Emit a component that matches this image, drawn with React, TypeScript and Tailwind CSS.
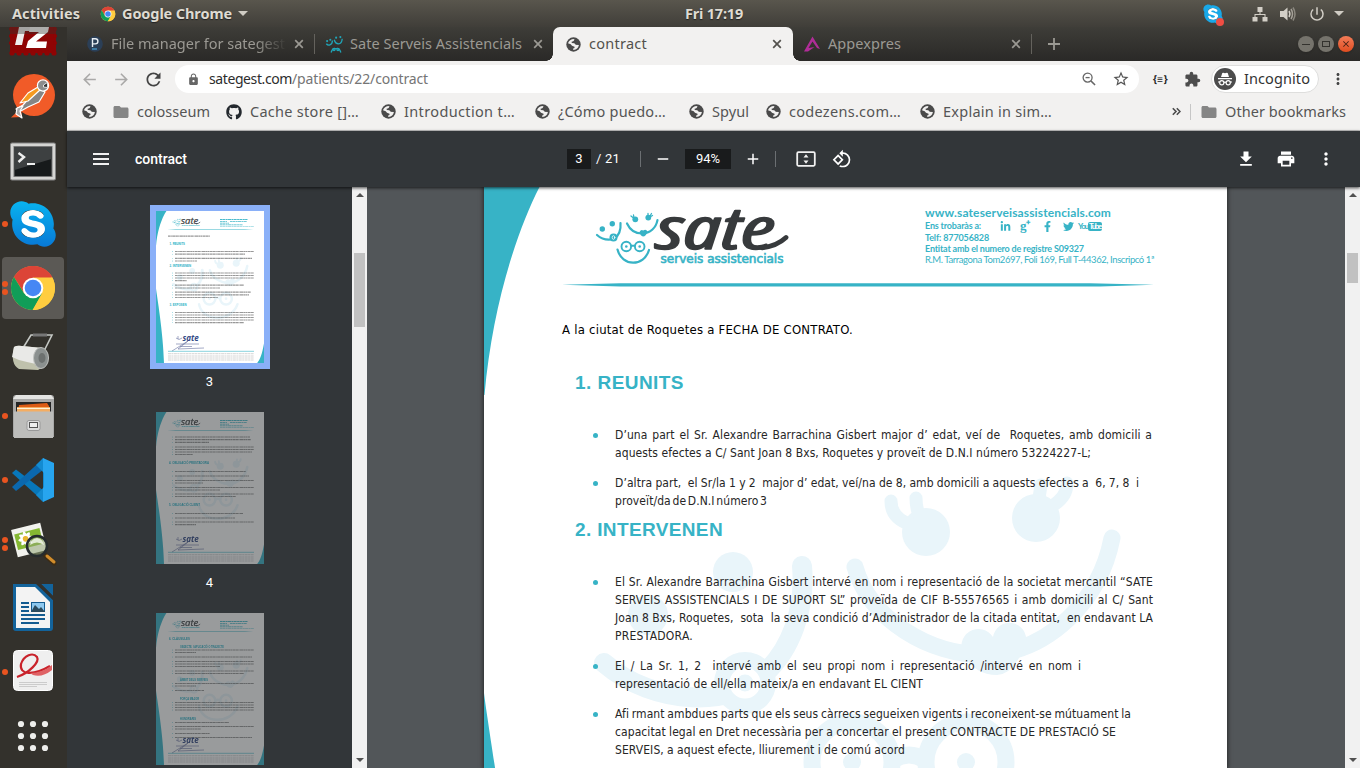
import React, { useLayoutEffect, useRef, useState } from 'react';
import {
  MdArrowBack, MdArrowForward, MdRefresh, MdLock, MdStarBorder, MdExtension, MdMoreVert,
  MdFolder, MdFileDownload, MdPrint, MdRotate90DegreesCcw, MdPowerSettingsNew,
  MdClose, MdAdd, MdRemove,
} from 'react-icons/md';
import { FaGithub, FaSkype, FaLinkedinIn, FaFacebookF, FaTwitter } from 'react-icons/fa';

const TEAL = '#37b3c6';

/* Text run stretched to a fixed width through letter or word spacing. */
function Fit({ w, text, words = false, className = '' }: { w: number; text: string; words?: boolean; className?: string }) {
  const ref = useRef<HTMLSpanElement>(null);
  const [gap, setGap] = useState(0);
  useLayoutEffect(() => {
    const el = ref.current;
    if (!el) return;
    const natural = el.getBoundingClientRect().width;
    const slots = words ? text.split('').filter((c) => c === ' ' || c === '\u00a0').length : text.length;
    setGap((w - natural) / Math.max(1, slots));
  }, []);
  return (
    <span className={`block shrink-0 whitespace-pre ${className}`} style={{ width: w }}>
      <span ref={ref} className="inline-block whitespace-pre" style={words ? { wordSpacing: gap } : { letterSpacing: gap }}>
        {text}
      </span>
    </span>
  );
}

function Globe() {
  return (
    <svg className="size-[15px] shrink-0" viewBox="0 0 15 15">
      <circle cx="7.5" cy="7.5" r="7.2" fill="#4a4a4a" />
      <path d="M2 6.2C2.6 4 4.6 2.1 7.2 1.9L8.6 2.6 7.4 4.2 5.6 4.8 5.8 6.1 8.4 6.3 9.8 7.8 12.9 8.1C12.5 10.800 10.400 12.900 7.500 13L6.900 11.700 8.500 11 8.500 9.700 6 8.800 4.700 7.200Z" fill="#f2f1f0" />
      <path d="M7.4 4.300L9.700 3.200 9.600 5.200 11.500 5.400 11.800 7.400 9.800 7.300 8.500 5.900Z" fill="#4a4a4a" />
    </svg>
  );
}

function TabClose({ className }: { className: string }) {
  return (
    <svg className={`size-[14px] shrink-0 ${className}`} viewBox="0 0 14 14">
      <path d="M3.200 3.200L10.800 10.800M10.800 3.200L3.200 10.800" stroke="currentColor" strokeWidth="1.700" />
    </svg>
  );
}

function ChromeLogo({ className }: { className: string }) {
  return (
    <svg className={className} viewBox="0 0 48 48">
      <circle cx="24" cy="24" r="22" fill="#fbc937" />
      <path d="M24 24L4.950 13A22 22 0 0 1 43.050 13Z" fill="#dc4437" />
      <path d="M24 13.500H43.400A22 22 0 0 0 4.950 13L15 29Z" fill="#dc4437" />
      <path d="M4.950 13A22 22 0 0 0 24 46L33.100 29.200 24 34 15 29.200Z" fill="#119d58" />
      <path d="M33.200 29.200L23.500 46A22 22 0 0 0 43.300 13.500H24Z" fill="#ffcd40" />
      <circle cx="24" cy="24" r="10.300" fill="#fff" />
      <circle cx="24" cy="24" r="8.300" fill="#4687f4" />
    </svg>
  );
}

function Faces({ color, eyes }: { color: string; eyes: string }) {
  return (
    <g fill="none" stroke={color} strokeWidth="17" strokeLinecap="round">
      <circle cx="733" cy="572" r="20" fill={color} stroke="none" />
      <circle cx="648" cy="615" r="20" fill={color} stroke="none" />
      <path d="M802 566C806 610 790 650 765 673C735 707 655 707 604 663" strokeWidth="20" />
      <circle cx="745" cy="683" r="31" fill={color} stroke="none" />
      <circle cx="745" cy="683" r="12" stroke={eyes} strokeWidth="7" />
      <path d="M855 567C870 620 930 655 985 655C1050 652 1100 600 1112 538" />
      <path d="M964 655A15 15 0 0 1 993 637A16 16 0 0 1 1026 642Q1015 674 997 675Q975 675 964 655Z" fill={color} stroke="none" />
      <circle cx="926" cy="532" r="24" fill={color} stroke="none" />
      <path d="M891 501C891 513 898 521 912 525M916 498C916 508 918 514 924 524" strokeWidth="13" />
      <circle cx="1036" cy="518" r="24" fill={color} stroke="none" />
      <path d="M1041 485L1038 505M1067 483C1067 493 1062 502 1046 509" strokeWidth="13" />
      <circle cx="852" cy="762" r="40" />
      <circle cx="966" cy="762" r="40" />
      <circle cx="852" cy="762" r="9" fill={color} stroke="none" />
      <circle cx="966" cy="762" r="9" fill={color} stroke="none" />
      <path d="M893 760Q909 750 925 760M780 800C800 920 1000 930 1045 800" />
    </g>
  );
}

/* Letterhead: side waves, watermark, logo and the ruled line. */
function Letterhead() {
  return (
    <g>
      <path d="M484 159H556C548 172 543 180 539.500 187C515 235 492 310 484.500 395H484Z" fill={TEAL} />
      <path d="M484 693C489 735 535 1000 539 1205H484Z" fill={TEAL} />
      <path d="M1227 1070C1215 1140 1200 1180 1180 1205H1227Z" fill={TEAL} />
      <Faces color="#e9f5fa" eyes="#fff" />
      <g fill="none" stroke={TEAL} strokeWidth="2.200" strokeLinecap="round">
        <path d="M597 235C602 239.500 608 240.500 614 239C619 235.500 621 229 620.500 223" />
        <path d="M627 223.500C630 230 636 233.500 642 233.500C650 233 656 228 657.500 220" />
        <path d="M617.500 249.500C622 267 644 267 649 250" />
        <circle cx="626.300" cy="246.500" r="4.800" strokeWidth="1.900" />
        <circle cx="639.700" cy="246.500" r="4.800" strokeWidth="1.900" />
        <path d="M631.500 245.800H634.500" strokeWidth="1.900" />
        <path d="M631 216L633.500 218M633.500 215L634 218M651.500 213.500L650 216M648 213.500V216M652.500 215.500L650 217" strokeWidth="1.300" />
        <g fill={TEAL} stroke="none">
          <circle cx="602.300" cy="229" r="2.700" />
          <circle cx="612.300" cy="223.800" r="2.700" />
          <circle cx="613.500" cy="237.500" r="4" />
          <circle cx="626.300" cy="246.500" r="1.300" />
          <circle cx="639.700" cy="246.500" r="1.300" />
          <circle cx="635.300" cy="219.300" r="2.900" />
          <circle cx="648.300" cy="217.600" r="2.900" />
          <path d="M639.500 232Q641 229 643.200 230.500Q646 228.500 647.500 231.500Q646 236.500 643 236.500Q640.500 236 639.500 232Z" />
        </g>
        <ellipse cx="613.500" cy="237.500" rx="1.300" ry="1.800" stroke="#fff" strokeWidth=".8" />
      </g>
      <text x="656" y="249" fontFamily="'Open Sans','Noto Sans',sans-serif" fontStyle="italic" fontWeight="400" fontSize="59" textLength="119" lengthAdjust="spacingAndGlyphs" fill="#373a3c" stroke="#373a3c" strokeWidth="1.500" strokeLinejoin="round">sate</text>
      <path d="M762 247.800Q777 246 786 237.500" fill="none" stroke="#373a3c" strokeWidth="4.800" strokeLinecap="round" />
      <text x="660.500" y="262.500" fontFamily="'DejaVu Sans',sans-serif" fontSize="11.500" textLength="123" lengthAdjust="spacingAndGlyphs" fill={TEAL} stroke={TEAL} strokeWidth=".55">serveis assistencials</text>
      <path d="M562 284.700L620 283.200H1090L1154 284.700L1100 286.400H620Z" fill={TEAL} />
    </g>
  );
}

type Row = [number, number, number];
function Thumb({ heads, rows }: { heads: [string, number, number, number][]; rows: Row[] }) {
  return (
    <svg className="block h-[152px] w-[108px] bg-white" viewBox="0 0 108 152">
      <g transform="scale(0.14535) translate(-484 -159)"><Letterhead /></g>
      <g stroke={TEAL} strokeWidth=".9" strokeDasharray="2 .3 3 .4">
        <path d="M64 8.500H91.500" /><path d="M64 10.500H71M74 10.500H91M64 12.200H73M64 13.800H87" strokeWidth=".7" />
        <path d="M64 15.500H98" strokeWidth=".4" />
      </g>
      {heads.map(([t, x, y, w]) => (
        <text key={t} x={x} y={y} fontSize="3.300" fontWeight="700" fontFamily="'Liberation Sans',sans-serif" textLength={w} lengthAdjust="spacingAndGlyphs" fill="#27afc5">{t}</text>
      ))}
      {rows.map(([x, x2, y]) => (
        <React.Fragment key={y}>
          <path d={`M${x} ${y}H${x2}`} stroke="#444" strokeOpacity=".55" strokeWidth="1.200" strokeDasharray="2.300 .3 1.200 .4 3.100 .3" />
          {x > 12 && <circle cx="16.500" cy={y} r=".4" fill={TEAL} />}
        </React.Fragment>
      ))}
      <text x="26.500" y="129.500" fontFamily="'Open Sans',sans-serif" fontStyle="italic" fontWeight="700" fontSize="8" fill="#344a86">sate</text>
      <path d="M20 127q3 3 6 0M22 125v3M20 133H43M24 135.500H36M16 140L32 130L22 138L48 137" stroke="#66709f" strokeWidth=".6" fill="none" />
      <path d="M12 140.300H98" stroke={TEAL} strokeWidth=".6" />
      <path d="M12 142.700H98M12 145H98M12 147H98M12 149H98" stroke="#888" strokeOpacity=".5" strokeWidth=".7" strokeDasharray="3 .4 2 .5" />
    </svg>
  );
}

const dot = 'absolute left-[2px] size-[6px] rounded-full bg-[#e95420]';
function Slot({ children, dots = 0, active = false }: { children: React.ReactNode; dots?: number; active?: boolean }) {
  return (
    <div className="relative flex h-16 w-[66px] shrink-0 items-center justify-center">
      {active && <div className="absolute inset-y-[1px] left-[2px] w-[62px] rounded-[4px] bg-[#5b5955]" />}
      <div className="relative size-12">{children}</div>
      {dots === 1 && <span className={`${dot} top-[29px]`} />}
      {dots === 2 && <><span className={`${dot} top-[25px]`} /><span className={`${dot} top-[33px]`} /></>}
    </div>
  );
}

function Dock() {
  return (
    <aside className="flex w-[67px] shrink-0 flex-col overflow-hidden bg-[#33312c]">
      <div className="flex h-[37px] w-[66px] shrink-0 justify-center overflow-hidden">
        <svg className="h-[37px] w-12" viewBox="0 0 48 37">
          <path d="M1 0H47V26H1Z" fill="#8f0404" />
          <g fill="#8f0404">{[3, 10, 17, 24, 31, 38, 45].map((x) => <circle key={x} cx={x} cy="26" r="2.600" />)}{[2, 9, 16].map((y) => <React.Fragment key={y}><circle cx="2" cy={y} r="2" /><circle cx="46" cy={y} r="2" /></React.Fragment>)}</g>
          <path d="M10 0H24L23 4H16L13 18H6L9 5Z" fill="#eee" />
          <path d="M21 0H40L39 5L27 14.500H38L37 21H17L19 14L30 5H20Z" fill="#fff" />
          <path d="M0 0H48V7H0Z" fill="#33312c" opacity=".4" />
        </svg>
      </div>
      <Slot>
        <svg viewBox="0 0 48 48">
          <circle cx="25" cy="23" r="21" fill="#f15b28" />
          <path d="M2 45.500L12 36L13 45Z" fill="#f15b28" />
          <g stroke="#fff" strokeWidth="1.200" strokeLinejoin="round">
            <path d="M29 16L36 20L30 30L19 35L10 40L7 37L14 33L21 25Z" fill="#858585" />
            <path d="M29 15L19 21L11 31L19 29L31 18Z" fill="#f59a20" />
            <path d="M8 36L14 34L11 39L13 46L7 42Z" fill="#aaa" />
            <circle cx="34" cy="13.500" r="5.600" fill="#8c8c8c" />
            <path d="M34.500 13L38.500 10.500V15.500L34.500 15Z" fill="#333" strokeWidth=".8" />
          </g>
        </svg>
      </Slot>
      <Slot>
        <svg viewBox="0 0 48 48">
          <rect x="1.500" y="7" width="45" height="37" rx="1.500" fill="#d5d5d3" stroke="#858585" />
          <rect x="5" y="10.500" width="38" height="30" fill="#171a1b" stroke="#777" />
          <path d="M5.500 11H42.500V23L5.500 34Z" fill="#3d4041" />
          <path d="M9.500 17L15 21L9.500 26" fill="none" stroke="#eee" strokeWidth="2.400" /><path d="M18 28H26" stroke="#eee" strokeWidth="2" />
        </svg>
      </Slot>
      <Slot dots={1}>
        <div className="absolute left-[10px] top-[10px] size-[28px] rounded-full bg-white" />
        <svg className="absolute size-0"><defs><linearGradient id="sky" x1="0" y1="0" x2="0" y2="1"><stop stopColor="#08b3f0" /><stop offset="1" stopColor="#0879d6" /></linearGradient></defs></svg>
        <FaSkype className="absolute -left-[2px] -top-[2px] size-[52px]" style={{ fill: 'url(#sky)' }} />
      </Slot>
      <Slot dots={2} active><ChromeLogo className="size-12" /></Slot>
      <Slot>
        <svg viewBox="0 0 48 48">
          <path d="M14 20L22 7H43L34 25" fill="none" stroke="#c5c8c4" strokeWidth="1.600" />
          <path d="M24 7H38" stroke="#777" strokeWidth="3" />
          <path d="M5 19Q8 17 13 18L33 20Q40 26 34 39L29 42L10 41Q1 36 5 19Z" fill="#bfc1ac" />
          <path d="M5 19Q8 17 13 18L33 20L27 36L18 34L10 32L3 29Z" fill="#e9e9e7" />
          <ellipse cx="32" cy="30" rx="7.500" ry="10.500" fill="#8b908f" stroke="#c0c2c0" />
          <ellipse cx="33" cy="30" rx="3.500" ry="5" fill="#6c706f" />
        </svg>
      </Slot>
      <Slot dots={1}>
        <svg viewBox="0 0 48 48">
          <path d="M4 6Q4 3 7 3H42Q45 3 45 6V45H4Z" fill="#a9a9a8" />
          <path d="M4 7L7 3H42L45 7Z" fill="#e4e4e2" />
          <rect x="7" y="10" width="35" height="12" fill="#252525" />
          <path d="M10 13L38 11L40 14V20H9Z" fill="#dc5b15" /><path d="M8 15H41V20H8Z" fill="#f4ad62" /><path d="M8 16.500H41" stroke="#fff1d8" />
          <path d="M5 19.500H44V46H5Z" fill="#bdbdbb" />
          <rect x="18" y="28.500" width="13" height="10" rx="2" fill="#ddd" stroke="#999" /><rect x="20.500" y="30.500" width="8" height="5" fill="#eee" stroke="#555" />
        </svg>
      </Slot>
      <Slot dots={1}>
        <svg viewBox="0 0 48 48">
          <path d="M3 17L7 13.500L35 35L35 46Z" fill="#0877ba" />
          <path d="M3 31L7 35L35 13L35 2Z" fill="#0b68ae" />
          <path d="M34 2L45 7V41L34 46Z" fill="#27a5ef" />
          <path d="M34 2L27 9L35 17V31L27 39L34 46Z" fill="#138bd1" />
        </svg>
      </Slot>
      <Slot dots={2}>
        <svg viewBox="0 0 48 48">
          <g transform="rotate(-14 20 20)"><rect x="5" y="6" width="30" height="28" fill="#f2f2ee" /><rect x="7" y="11" width="26" height="16" fill="#85b832" />
            <g fill="#fff">{[0, 45, 90, 135].map((r) => <ellipse key={r} cx="17" cy="18" rx="7.500" ry="2.400" transform={`rotate(${r} 17 18)`} />)}</g><circle cx="17" cy="18" r="2.800" fill="#e8b52f" /></g>
          <path d="M36 35L45 43" stroke="#3d2c14" strokeWidth="5" strokeLinecap="round" /><path d="M38 36L45 42" stroke="#d18d2c" strokeWidth="3" strokeLinecap="round" />
          <circle cx="28" cy="26" r="10" fill="#91a477" fillOpacity=".55" stroke="#252b2d" strokeWidth="2.600" />
          <path d="M21 25Q28 20 35 25Q34 19 28 18Q22 19 21 25Z" fill="#fff" opacity=".75" />
        </svg>
      </Slot>
      <Slot>
        <svg viewBox="0 0 48 48">
          <path d="M4 0H27L44 16V44Q44 47 41 47H7Q4 47 4 44Z" fill="#13639b" /><path d="M32 0H44V12Z" fill="#13639b" />
          <path d="M29 0H32L44 12V16Z" fill="#33312c" />
          <path d="M7 3H26L41 18V44H7Z" fill="#f3f3f3" />
          <path d="M12 19H20M12 23H20M12 27H20M12 31H36M12 35H36M12 39H30" stroke="#135b90" strokeWidth="2" />
          <rect x="22.500" y="18.500" width="13" height="9" fill="#8dc8ef" stroke="#135b90" /><path d="M22 28L26 21L30 25L32 23L36 28Z" fill="#2b4a5d" />
        </svg>
      </Slot>
      <Slot dots={1}>
        <svg viewBox="0 0 48 48">
          <rect x="4.500" y="2.500" width="39" height="40" rx="4" fill="#efefef" stroke="#fff" />
          <path d="M10 34.500H38M10 36.500H38M10 38.500H28" stroke="#ccc" />
          <path d="M8 29C20 25 31 14 28 9C24 4 15 7 12 16C10 27 24 28 41 18" fill="none" stroke="#c9232b" strokeWidth="2.200" />
          <path d="M21 25Q33 25 43 17V22Q33 30 24 27Z" fill="#df6265" />
        </svg>
      </Slot>
      <Slot>
        <svg viewBox="0 0 48 48"><g fill="#eeeeec">{[12, 24, 36].map((x) => [12, 24, 36].map((y) => <circle key={`${x}${y}`} cx={x} cy={y} r="3.100" />))}</g></svg>
      </Slot>
    </aside>
  );
}

function TopBar() {
  return (
    <header className="flex h-[27px] shrink-0 items-center bg-gradient-to-b from-[#59564d] to-[#403e39] pl-3 font-bold text-[#dfdbd2] [text-shadow:0_1px_1px_#222]">
      <Fit w={68} text="Activities" className="text-[14.500px]" />
      <ChromeLogo className="ml-5 size-4 shrink-0" />
      <Fit w={110} text="Google Chrome" className="ml-[6px] text-[14.500px]" />
      <span className="ml-[6px] border-x-[5px] border-t-[5px] border-x-transparent border-t-[#d0ccc4]" />
      <Fit w={58} text="Fri 17:19" className="ml-[437px] text-[14.500px]" />
      <div className="relative ml-[459px] size-[22px] shrink-0">
        <span className="absolute left-[5px] top-[5px] size-3 rounded-full bg-white" />
        <FaSkype className="relative size-[22px] text-[#19a8e8]" />
        <span className="absolute bottom-[-1px] right-0 size-[8px] rounded-full bg-[#f04d43]" />
      </div>
      <svg className="ml-[28px] size-4 shrink-0" viewBox="0 0 16 16"><path d="M5.500 1H10.500V6H5.500ZM.5 11H5.500V15.500H.5ZM10.500 11H15.500V15.500H10.500ZM7.500 6H8.500V8H13.500V11H12.500V9H3.500V11H2.500V8H7.500Z" fill="#d3cfc7" /></svg>
      <svg className="ml-[12px] size-4 shrink-0" viewBox="0 0 16 16"><path d="M0 5H3.500L7.500 1.500V14.500L3.500 11H0Z" fill="#d3cfc7" /><g fill="none" strokeWidth="1.500"><path d="M9 5Q10.800 8 9 11" stroke="#d3cfc7" /><path d="M11 3Q14 8 11 13" stroke="#a5a198" /><path d="M13 1.500Q17 8 13 14.500" stroke="#8b887f" /></g></svg>
      <MdPowerSettingsNew className="ml-[12px] size-[18px] shrink-0 text-[#d3cfc7]" />
      <span className="ml-[8px] border-x-[5px] border-t-[5px] border-x-transparent border-t-[#d0ccc4]" />
    </header>
  );
}

function TabStrip() {
  return (
    <div className="flex h-[34px] items-center bg-gradient-to-b from-[#3e3d38] to-[#2a2927] text-[14.500px] text-[#9b9993]">
      <div className="ml-2 flex h-full w-[239px] shrink-0 items-center pl-3">
        <svg className="size-4 shrink-0" viewBox="0 0 16 16"><circle cx="8" cy="8" r="7.800" fill="#2b3f57" /><path d="M5.500 11V2.700H8.300A2.600 2.600 0 0 1 8.300 7.900H5.500" fill="none" stroke="#e8eef3" strokeWidth="1.400" /><path d="M5 13H10" stroke="#4ba1d4" strokeWidth="1.200" /></svg>
        <div className="ml-2 w-[176px] overflow-hidden [mask-image:linear-gradient(to_right,black_82%,transparent)]"><Fit w={174} text="File manager for sategest" /></div>
        <TabClose className="ml-[5px]" />
      </div>
      <div className="flex h-full w-[239px] shrink-0 items-center">
        <span className="h-5 w-px bg-[#64625d]" />
        <svg className="ml-[10px] size-[18px] shrink-0" viewBox="592 202 68 68"><g fill="none" stroke="#20a5b8" strokeWidth="5"><path d="M597 235C603 243 620 243 620 223M627 220C632 239 655 243 657 216M615 268Q622 247 633 254Q645 247 652 268" /><circle cx="626" cy="257" r="4" /><circle cx="641" cy="257" r="4" /></g><g fill="#20a5b8"><circle cx="600" cy="225" r="4" /><circle cx="612" cy="220" r="4" /><circle cx="634" cy="212" r="4" /><circle cx="650" cy="210" r="4" /></g></svg>
        <Fit w={172} text="Sate Serveis Assistencials" className="ml-[7px]" />
        <TabClose className="ml-[9px]" />
      </div>
      <div className="relative flex h-full w-[240px] shrink-0 items-center rounded-t-[7px] bg-[#f2f1f0] pl-[13px] text-[#53514d]">
        <span className="absolute -left-[7px] bottom-0 size-[7px] bg-[radial-gradient(circle_at_0_0,transparent_6.500px,#f2f1f0_7px)]" />
        <span className="absolute -right-[7px] bottom-0 size-[7px] bg-[radial-gradient(circle_at_7px_0,transparent_6.500px,#f2f1f0_7px)]" />
        <Globe />
        <Fit w={58} text="contract" className="ml-[8px]" />
        <TabClose className="ml-[123px]" />
      </div>
      <div className="flex h-full w-[239px] shrink-0 items-center pl-[11px]">
        <svg className="size-4 shrink-0" viewBox="0 0 16 16"><path d="M8.500 .5L16 13L13 12L8.500 5.500L4.500 12L10.500 11L4 15.500H0Z" fill="#b02d98" /></svg>
        <Fit w={73} text="Appexpres" className="ml-2" />
        <TabClose className="ml-[108px]" />
        <span className="ml-[8px] h-5 w-px bg-[#64625d]" />
      </div>
      <svg className="ml-[13px] size-[18px] shrink-0" viewBox="0 0 18 18"><path d="M9 3V15M3 9H15" stroke="currentColor" strokeWidth="1.800" /></svg>
      <div className="ml-[235px] flex gap-1">
        <span className="flex size-4 items-center justify-center rounded-full bg-[#75736c] shadow"><span className="h-px w-2 bg-[#33322e]" /></span>
        <span className="flex size-4 items-center justify-center rounded-full bg-[#75736c] shadow"><span className="h-[6px] w-2 border border-[#33322e]" /></span>
        <span className="flex size-4 items-center justify-center rounded-full bg-gradient-to-b from-[#f37c57] to-[#df4c1e] shadow"><MdClose className="size-[10px] text-[#432014]" /></span>
      </div>
    </div>
  );
}

function AddressBar() {
  return (
    <div className="flex h-9 items-center bg-[#f2f1f0] pl-[13px]">
      <MdArrowBack className="size-[19px] text-[#aaa9a8]" />
      <MdArrowForward className="ml-[13px] size-[19px] text-[#aaa9a8]" />
      <MdRefresh className="ml-[12px] size-[21px] text-[#444]" />
      <div className="ml-[11px] flex h-7 w-[964px] items-center rounded-full bg-white pl-3">
        <MdLock className="size-[13px] text-[#666]" />
        <Fit w={83} text="sategest.com" className="mb-px ml-[9px] text-[14px] text-[#2d2d2d]" />
        <Fit w={136} text="/patients/22/contract" className="mb-px text-[14px] text-[#757575]" />
        <svg className="ml-[654px] size-[14px] shrink-0" viewBox="0 0 15 15"><g fill="none" stroke="#666" strokeWidth="1.400"><circle cx="6" cy="6" r="4.800" /><path d="M9.500 9.500L14 14" strokeWidth="1.600" /><path d="M3.800 6H8.200" /></g></svg>
        <MdStarBorder className="ml-[16px] size-[18px] text-[#555]" />
      </div>
      <span className="ml-[14px] text-[10px] font-bold leading-none text-[#222]"><Fit w={15} text="{≡}" /></span>
      <MdExtension className="ml-[16px] size-[17px] text-[#4c4c4c]" />
      <div className="ml-[10px] flex h-7 w-[108px] items-center rounded-full border border-[#dededd] bg-white pl-[2px]">
        <svg className="size-[22px] shrink-0" viewBox="0 0 22 22"><circle cx="11" cy="11" r="11" fill="#4c4c4c" /><path d="M7 9L8.300 5Q9.500 4.600 11 5.300Q12.500 4.600 13.700 5L15 9ZM4 10H18V11.300H4Z" fill="#fff" /><g fill="none" stroke="#fff" strokeWidth="1.200"><circle cx="7.800" cy="14.700" r="2.100" /><circle cx="14.200" cy="14.700" r="2.100" /><path d="M9.900 14.500Q11 13.800 12.100 14.500M4 14H6M16 14H18" /></g></svg>
        <Fit w={66} text="Incognito" className="mb-px ml-2 text-[14.500px] text-[#333]" />
      </div>
      <MdMoreVert className="ml-[10px] size-[18px] text-[#444]" />
    </div>
  );
}

const Mark = ({ gap, text, w }: { gap: string; text: string; w: number }) => (
  <><span className={gap}><Globe /></span><Fit w={w} text={text} className="ml-[8px]" /></>
);

function Bookmarks() {
  return (
    <div className="flex h-[34px] items-center border-b border-[#c5c5c4] bg-[#f2f1f0] pb-1 pl-[15px] text-[14.500px] text-[#555]">
      <Globe />
      <MdFolder className="ml-[15px] size-[18px] text-[#858585]" />
      <Fit w={73} text="colosseum" className="ml-[7px]" />
      <FaGithub className="ml-[16px] size-4 text-[#24292e]" />
      <Fit w={109} text="Cache store []…" className="ml-[8px]" />
      <Mark gap="ml-[22px]" text="Introduction t…" w={111} />
      <Mark gap="ml-[20px]" text="¿Cómo puedo…" w={108} />
      <Mark gap="ml-[23px]" text="Spyul" w={37} />
      <Mark gap="ml-[17px]" text="codezens.com…" w={112} />
      <Mark gap="ml-[19px]" text="Explain in sim…" w={109} />
      <svg className="ml-[120px] size-[9px] shrink-0" viewBox="0 0 9 9"><path d="M.8 1.200L4 4.500L.8 7.800M4.800 1.200L8 4.500L4.800 7.800" fill="none" stroke="#4c4c4c" strokeWidth="1.600" /></svg>
      <span className="ml-[9px] h-4 w-px bg-[#c6c6c6]" />
      <MdFolder className="ml-[9px] size-[18px] text-[#858585]" />
      <Fit w={121} text="Other bookmarks" className="ml-[7px]" />
    </div>
  );
}

function PdfToolbar() {
  return (
    <div className="relative z-10 flex h-14 items-center bg-[#323639] pl-[22px] text-[13px] text-white shadow-[0_1px_3px_rgba(0,0,0,.7)] [font-family:Roboto,sans-serif]">
      <svg className="size-6 shrink-0" viewBox="0 0 24 24"><path d="M4 6H20V8H4ZM4 11H20V13H4ZM4 16H20V18H4Z" fill="#f1f1f1" /></svg>
      <Fit w={52} text="contract" className="ml-[22px] text-[14px] font-medium" />
      <span className="ml-[380px] flex h-5 w-6 items-center justify-center bg-[#191b1c]">3</span>
      <Fit w={24} text="/ 21" className="ml-[5px]" />
      <span className="ml-[20px] h-4 w-px bg-[#6b6f72]" />
      <MdRemove className="ml-[13px] size-[18px] shrink-0" />
      <span className="ml-[13px] flex h-5 w-[46px] items-center justify-center bg-[#191b1c]">94%</span>
      <MdAdd className="ml-[13px] size-[18px] shrink-0" />
      <span className="ml-[13px] h-4 w-px bg-[#6b6f72]" />
      <svg className="ml-[20px] h-4 w-5 shrink-0" viewBox="0 0 20 16"><rect x="1.200" y="1.200" width="17.600" height="13.600" rx="1.200" fill="none" stroke="#f1f1f1" strokeWidth="1.800" /><path d="M10 3.300L12.500 6.500H7.500ZM10 12.700L12.500 9.500H7.500Z" fill="#f1f1f1" /></svg>
      <MdRotate90DegreesCcw className="ml-[16px] size-[20px] shrink-0" />
      <MdFileDownload className="ml-[384px] size-[20px] shrink-0" />
      <MdPrint className="ml-[20px] size-5 shrink-0" />
      <MdMoreVert className="ml-[20px] size-5 shrink-0" />
    </div>
  );
}

function Scrollbar({ thumb }: { thumb: string }) {
  return (
    <div className="flex w-[15px] shrink-0 flex-col items-center bg-[#f1f1f1]">
      <span className="mt-[6px] border-x-4 border-b-4 border-x-transparent border-b-[#505050]" />
      <span className={`mt-[56px] w-[11px] bg-[#c1c1c1] ${thumb}`} />
      <span className="mb-[6px] mt-auto border-x-4 border-t-4 border-x-transparent border-t-[#505050]" />
    </div>
  );
}

function Sidebar() {
  return (
    <div className="flex w-[285px] shrink-0 flex-col items-center overflow-hidden bg-[#323639] pt-[18px] text-[13px] text-white [font-family:Roboto,sans-serif]">
      <div className="bg-[#8ab0f8] p-[6px]">
        <Thumb
          heads={[['1. REUNITS', 13.500, 34, 15.500], ['2. INTERVENEN', 13.500, 55.500, 21.500], ['3. EXPOSEN', 13.500, 95, 17]]}
          rows={[[12, 54, 25.200], [19, 98, 40.500], [19, 89, 43.200], [19, 96, 47.300], [19, 41, 50], [19, 98, 62], [19, 98, 64.500], [19, 98, 67], [19, 31, 69.700], [19, 88, 74.200], [19, 64, 77], [19, 95, 81.200], [19, 93, 83.800], [19, 62, 86.500], [19, 98, 101.500], [19, 98, 104], [19, 98, 106.500], [19, 98, 109], [19, 88, 111.700]]}
        />
      </div>
      <span className="mt-[5px] h-4 leading-4">3</span>
      <div className="mt-[22px] opacity-50">
        <Thumb
          heads={[['4. OBLIGACIÓ PRESTADORA', 13, 52, 40], ['5. OBLIGACIÓ CLIENT', 13, 94, 31]]}
          rows={[[19, 94, 25], [19, 95, 27.700], [19, 53, 30.400], [19, 98, 35], [19, 98, 37.500], [19, 96, 40], [19, 37, 42.500], [19, 90, 59.500], [19, 93, 64], [19, 98, 68.500], [19, 47, 71], [19, 98, 75.500], [19, 64, 78], [19, 98, 82], [19, 80, 84.500], [19, 87, 101.500], [19, 79, 106], [19, 98, 110], [19, 40, 112.700]]}
        />
      </div>
      <span className="mt-[11px] h-4 leading-4">4</span>
      <div className="mt-[22px] opacity-50">
        <Thumb
          heads={[['6. CLÀUSULES', 13, 27, 21], ['OBJECTE. I APLICACIÓ O TRAJECTE', 24, 34.500, 44], ['ÀMBIT DELS SERVEIS', 24, 68, 28], ['FORÇA MAJOR', 24, 86.500, 19], ['HONORARIS', 24, 106.500, 16]]}
          rows={[[19, 98, 37], [19, 40, 39.500], [19, 96, 44], [19, 98, 48.500], [19, 98, 51], [19, 64, 53.500], [19, 98, 58], [19, 88, 60.500], [19, 98, 70.500], [19, 40, 73], [19, 48, 77.500], [19, 98, 89.500], [19, 98, 92], [19, 98, 94.500], [19, 98, 97], [19, 73, 109.500], [19, 98, 113.500], [19, 45, 116], [19, 54, 120.500], [19, 96, 124.500]]}
        />
      </div>
    </div>
  );
}

const paragraphs: { top: string; lines: [string, number][] }[] = [
  { top: 'mt-[31px]', lines: [['D’una part el Sr. Alexandre Barrachina Gisbert major d’ edat, veí de  Roquetes, amb domicili a', 537], ['aquests efectes a C/ Sant Joan 8 Bxs, Roquetes y proveït de D.N.I número 53224227-L;', 476]] },
  { top: 'mt-3', lines: [['D’altra part,  el Sr/la 1 y 2  major d’ edat, veí/na de 8, amb domicili a aquests efectes a  6, 7, 8  i', 524], ['proveït/da de D.N.I número 3', 152]] },
  { top: 'mt-[31px]', lines: [['El Sr. Alexandre Barrachina Gisbert intervé en nom i representació de la societat mercantil “SATE', 538], ['SERVEIS ASSISTENCIALS I DE SUPORT SL” proveïda de CIF B-55576565 i amb domicili al C/ Sant', 538], ['Joan 8 Bxs, Roquetes,  sota  la seva condició d’Administrador de la citada entitat,  en endavant LA', 538], ['PRESTADORA.', 78]] },
  { top: 'mt-3', lines: [['El / La Sr. 1, 2  intervé amb el seu propi nom i representació /intervé en nom i', 466], ['representació de ell/ella mateix/a en endavant EL CIENT', 308]] },
  { top: 'mt-3', lines: [['Afi rmant ambdues parts que els seus càrrecs segueixen vigents i reconeixent-se mútuament la', 516], ['capacitat legal en Dret necessària per a concertar el present CONTRACTE DE PRESTACIÓ SE', 501], ['SERVEIS, a aquest efecte, lliurement i de comú acord', 290]] },
];

function Paragraph({ i }: { i: number }) {
  const p = paragraphs[i];
  return (
    <div className={`${p.top} flex pl-[109px]`}>
      <span className="mt-[7px] size-[5px] shrink-0 rounded-full bg-[#37b3c6]" />
      <div className="ml-[17px]">
        {p.lines.map(([t, w]) => <Fit key={t} w={w} text={t} words={t.includes(' ')} className="h-[18px] text-[12px] leading-[18px] tracking-[0.08px] text-[#262626]" />)}
      </div>
    </div>
  );
}

function Page() {
  return (
    <article className="relative ml-[117px] h-[581px] w-[743px] shrink-0 bg-white shadow-[0_0_4px_1px_rgba(0,0,0,.5)] [font-family:'DejaVu_Sans_Condensed','DejaVu_Sans',sans-serif] [font-stretch:condensed]">
      <svg className="absolute inset-0 h-[581px] w-[743px]" viewBox="484 187 743 581"><Letterhead /></svg>
      <div className="relative">
        <div className="ml-[441px] h-[134px] pt-[19px] font-bold text-[#37b3c6] [font-family:Lato,sans-serif]">
          <Fit w={186} text="www.sateserveisassistencials.com" className="text-[12px] leading-[14px]" />
          <div className="flex h-[12px] items-center text-[9px]">
            <Fit w={56} text="Ens trobaràs a:" />
            <FaLinkedinIn className="ml-[19px] size-[11px]" />
            <Fit w={10} text="g⁺" className="ml-[9px] text-[13px] leading-[10px] [font-family:'Liberation_Serif',serif]" />
            <FaFacebookF className="ml-[12px] size-[11px]" />
            <FaTwitter className="ml-[10px] size-[11px]" />
            <span className="ml-[4px] flex items-center text-[8px] leading-[9px] tracking-tight"><Fit w={10} text="You" /><span className="rounded-[2px] bg-[#37b3c6] px-px text-white"><Fit w={12} text="Tube" /></span></span>
          </div>
          <Fit w={64} text="Telf: 877056828" className="text-[9px] leading-[11px]" />
          <Fit w={159} text="Entitat amb el numero de registre S09327" className="text-[9px] leading-[11px]" />
          <Fit w={229} text="R.M. Tarragona Tom2697, Foli 169, Full T-44362, Inscripcó 1ª" className="text-[9.500px] font-normal leading-[11px]" />
        </div>
        <Fit w={291} text="A la ciutat de Roquetes a FECHA DE CONTRATO." className="ml-[78px] h-[18px] text-[13px] leading-[18px] text-black" />
        <h2 className="ml-[91px] mt-[32px] h-6 text-[19px] font-bold leading-6 text-[#37b3c6] [font-family:'Liberation_Sans',sans-serif] [font-stretch:normal]"><Fit w={109} text="1. REUNITS" /></h2>
        <Paragraph i={0} />
        <Paragraph i={1} />
        <h2 className="ml-[91px] mt-[8px] h-6 text-[19px] font-bold leading-6 text-[#37b3c6] [font-family:'Liberation_Sans',sans-serif] [font-stretch:normal]"><Fit w={148} text="2. INTERVENEN" /></h2>
        <Paragraph i={2} />
        <Paragraph i={3} />
        <Paragraph i={4} />
      </div>
    </article>
  );
}

export default function App() {
  return (
    <div className="flex h-[768px] w-[1360px] flex-col overflow-hidden bg-[#323639] [font-family:'Noto_Sans','Open_Sans',sans-serif]">
      <TopBar />
      <div className="flex min-h-0 flex-1">
        <Dock />
        <main className="flex min-w-0 flex-1 flex-col">
          <TabStrip />
          <AddressBar />
          <Bookmarks />
          <PdfToolbar />
          <div className="flex min-h-0 flex-1">
            <Sidebar />
            <Scrollbar thumb="h-[74px]" />
            <div className="flex min-w-0 flex-1 overflow-hidden bg-[#525659]"><Page /></div>
            <Scrollbar thumb="h-[30px]" />
          </div>
        </main>
      </div>
    </div>
  );
}
